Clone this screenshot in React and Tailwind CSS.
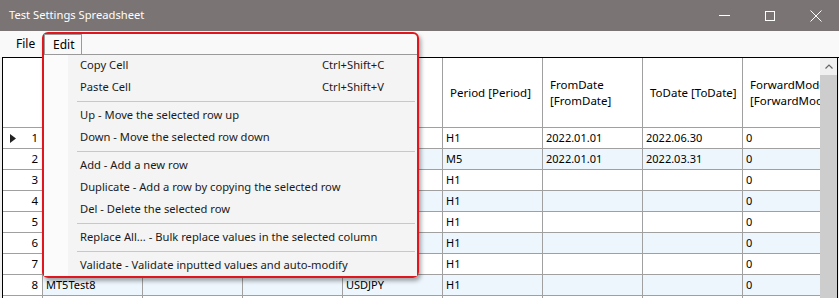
import React from "react";

const cols = [
  { h: [""] },
  { h: [""] },
  { h: [""] },
  { h: [""] },
  { h: ["Period [Period]"] },
  { h: ["FromDate", "[FromDate]"] },
  { h: ["ToDate [ToDate]"] },
  { h: ["ForwardMode", "[ForwardMode]"] },
];

const rows = [
  ["", "", "", "", "H1", "2022.01.01", "2022.06.30", "0"],
  ["", "", "", "", "M5", "2022.01.01", "2022.03.31", "0"],
  ["", "", "", "", "H1", "", "", "0"],
  ["", "", "", "", "H1", "", "", "0"],
  ["", "", "", "", "H1", "", "", "0"],
  ["", "", "", "", "H1", "", "", "0"],
  ["", "", "", "", "H1", "", "", "0"],
  ["MT5Test8", "", "", "USDJPY", "H1", "", "", "0"],
  ["MT5Test9", "", "", "USDJPY", "H1", "", "", "0"],
];

function MenuItem({ label, shortcut }) {
  return (
    <div className="flex h-[22px] items-center pl-[36px] pr-[20px] text-[#1a1a1a]">
      <span className="flex-1 whitespace-nowrap">{label}</span>
      {shortcut && <span className="w-[75px] whitespace-nowrap">{shortcut}</span>}
    </div>
  );
}

function Sep() {
  return <div className="mb-[2px] ml-[33px] mr-[2px] mt-[3px] h-px bg-[#c8c8c8]" />;
}

export default function App() {
  return (
    <div
      className="relative h-[298px] w-[839px] overflow-hidden bg-[#f0f0f0] text-[11.5px] text-black"
      style={{ fontFamily: '"Noto Sans", "Open Sans", sans-serif' }}
    >
      {/* Title bar */}
      <div className="flex h-[31px] items-center bg-[#7a7574] text-white">
        <span className="pl-[9px] text-[11.2px]">Test Settings Spreadsheet</span>
        <div className="ml-auto flex h-full items-center">
          <div className="flex h-full w-[46px] items-center justify-center">
            <div className="h-px w-[11px] bg-white" />
          </div>
          <div className="flex h-full w-[46px] items-center justify-center">
            <div className="h-[10px] w-[10px] border border-white" />
          </div>
          <div className="flex h-full w-[46px] items-center justify-center">
            <svg width="12" height="12" viewBox="0 0 12 12">
              <path d="M0.5 0.5 L11.5 11.5 M11.5 0.5 L0.5 11.5" stroke="white" strokeWidth="1" />
            </svg>
          </div>
        </div>
      </div>

      {/* Menu bar */}
      <div className="flex h-[26px] items-center bg-[#f9f9f9] text-[12px]">
        <span className="pl-[16px] pr-[10px]">File</span>
      </div>

      {/* Grid */}
      <div className="ml-[2px] flex h-[241px] border-l border-t border-black bg-white">
        <div className="flex-1 overflow-hidden">
          {/* Header */}
          <div className="flex h-[70px] w-max">
            <div className="w-[40px] shrink-0 border-b border-r border-[#a0a0a0] bg-white" />
            {cols.map((c, i) => (
              <div
                key={i}
                className="flex w-[100px] shrink-0 flex-col justify-center overflow-hidden whitespace-nowrap border-b border-r border-[#a0a0a0] bg-white px-[7px] leading-[16px]"
              >
                {c.h.map((t, j) => (
                  <span key={j}>{t}</span>
                ))}
              </div>
            ))}
          </div>
          {rows.map((r, i) => (
            <div
              key={i}
              className={`flex h-[21px] w-max text-[11px] ${i % 2 === 1 ? "bg-[#eef6fd]" : "bg-white"}`}
            >
              <div className="relative flex w-[40px] shrink-0 items-center justify-end border-b border-r border-[#a0a0a0] bg-white pr-[4px] text-[11.5px]">
                {i === 0 && (
                  <svg className="absolute left-[7px] top-[6px]" width="6" height="9" viewBox="0 0 6 9">
                    <path d="M0 0 L6 4.5 L0 9 Z" fill="#222" />
                  </svg>
                )}
                {i + 1}
              </div>
              {r.map((v, j) => (
                <div
                  key={j}
                  className="flex w-[100px] shrink-0 items-center overflow-hidden whitespace-nowrap border-b border-r border-[#a0a0a0] px-[3px]"
                >
                  {v}
                </div>
              ))}
            </div>
          ))}
        </div>
        {/* Scrollbar */}
        <div className="flex w-[17px] shrink-0 flex-col bg-[#cdcdcd]">
          <div className="flex h-[17px] items-center justify-center bg-[#f0f0f0]">
            <svg width="8" height="5" viewBox="0 0 8 5">
              <path d="M0.5 4.5 L4 1 L7.5 4.5" stroke="#666" fill="none" strokeWidth="1.2" />
            </svg>
          </div>
        </div>
        <div className="w-px shrink-0 bg-black" />
        <div className="w-px shrink-0 bg-[#f0f0f0]" />
      </div>

      {/* Dropdown menu with annotation */}
      <div className="absolute left-[42px] top-[32px] h-[246px] w-[377px] rounded-[6px] border-2 border-[#e0161e] shadow-[2px_3px_4px_rgba(0,0,0,0.35)]">
        <div className="absolute left-0 top-0 flex h-[21px] w-[38px] items-center border border-b-0 border-[#9a9a9a] bg-[#f9f9f9] pl-[8px] text-[12px]">
          Edit
        </div>
        <div className="absolute left-0 top-[20px] h-[222px] w-[373px] border-t border-[#9a9a9a] bg-[#f4f4f4] text-[11.2px]">
          <div className="absolute left-0 top-0 h-full w-[24px] bg-[#fbfbfb]" />
          <div className="relative -mt-px">
            <MenuItem label="Copy Cell" shortcut="Ctrl+Shift+C" />
            <MenuItem label="Paste Cell" shortcut="Ctrl+Shift+V" />
            <Sep />
            <MenuItem label="Up - Move the selected row up" />
            <MenuItem label="Down - Move the selected row down" />
            <Sep />
            <MenuItem label="Add - Add a new row" />
            <MenuItem label="Duplicate - Add a row by copying the selected row" />
            <MenuItem label="Del - Delete the selected row" />
            <Sep />
            <MenuItem label="Replace All... - Bulk replace values in the selected column" />
            <Sep />
            <MenuItem label="Validate - Validate inputted values and auto-modify" />
          </div>
        </div>
      </div>
    </div>
  );
}
